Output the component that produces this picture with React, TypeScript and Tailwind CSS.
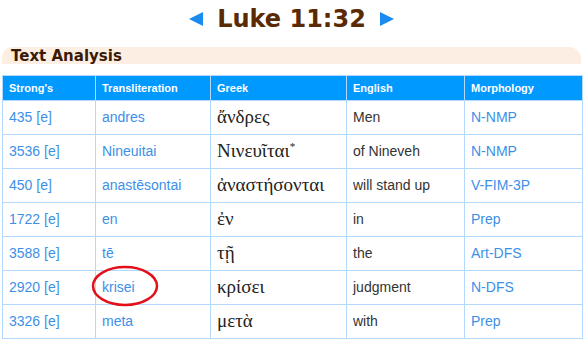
import React from 'react';

const rows = [
  { num: '435', translit: 'andres', greek: 'ἄνδρες', english: 'Men', morph: 'N-NMP' },
  { num: '3536', translit: 'Nineuitai', greek: 'Νινευῖται', star: true, english: 'of Nineveh', morph: 'N-NMP' },
  { num: '450', translit: 'anastēsontai', greek: 'ἀναστήσονται', english: 'will stand up', morph: 'V-FIM-3P' },
  { num: '1722', translit: 'en', greek: 'ἐν', english: 'in', morph: 'Prep' },
  { num: '3588', translit: 'tē', greek: 'τῇ', english: 'the', morph: 'Art-DFS' },
  { num: '2920', translit: 'krisei', greek: 'κρίσει', english: 'judgment', morph: 'N-DFS', circled: true },
  { num: '3326', translit: 'meta', greek: 'μετὰ', english: 'with', morph: 'Prep' },
];

const Arrow = ({ dir }: { dir: 'left' | 'right' }) => (
  <svg width="16" height="16" viewBox="0 0 16 16" className="shrink-0">
    {dir === 'left' ? <polygon points="15,1 15,15 1,8" fill="#1a8cf0" /> : <polygon points="1,1 1,15 15,8" fill="#1a8cf0" />}
  </svg>
);

export default function App() {
  return (
    <div className="w-[583px] h-[340px] bg-white overflow-hidden font-['Liberation_Sans',Arial,sans-serif]">
      {/* Title */}
      <div className="flex items-center justify-center h-[36px] pt-[2px]">
        <Arrow dir="left" />
        <h1 className="mx-[13px] font-['DejaVu_Sans',Verdana,sans-serif] font-bold text-[24px] leading-[30px] text-[#5a2a04]">
          Luke 11:32
        </h1>
        <Arrow dir="right" />
      </div>

      {/* Section heading */}
      <div className="mx-[2px] mt-[11px] h-[17px] bg-[#fdeee3] rounded-tl-[10px] rounded-tr-[12px] pl-[9px]">
        <h2 className="font-['DejaVu_Sans',Verdana,sans-serif] font-bold text-[15px] leading-[19px] text-[#3a1a04]">
          Text Analysis
        </h2>
      </div>

      {/* Table */}
      <table className="mx-[2px] mt-[11px] w-[580px] table-fixed border-collapse">
        <colgroup>
          <col className="w-[93px]" />
          <col className="w-[115px]" />
          <col className="w-[136px]" />
          <col className="w-[118px]" />
          <col className="w-[118px]" />
        </colgroup>
        <thead>
          <tr className="bg-[#0099ff] h-[25px]">
            {["Strong's", 'Transliteration', 'Greek', 'English', 'Morphology'].map((h) => (
              <th key={h} className="border border-[#b3d9ff] px-[6px] text-left text-[11px] font-bold text-white">
                {h}
              </th>
            ))}
          </tr>
        </thead>
        <tbody>
          {rows.map((r) => (
            <tr key={r.num} className="h-[34px]">
              <td className="border border-[#b3d9ff] px-[6px] text-[14px] text-[#3d8fe8]">{r.num} [e]</td>
              <td className="border border-[#b3d9ff] px-[6px] text-[14px] text-[#3d8fe8]">
                {r.circled ? (
                  <span className="relative inline-block">
                    {r.translit}
                    <svg width="68" height="42" viewBox="0 0 68 42" className="absolute left-[-11px] top-[-12px] pointer-events-none">
                      <ellipse cx="34" cy="21" rx="32" ry="19" fill="none" stroke="#e3101c" strokeWidth="2.5" />
                    </svg>
                  </span>
                ) : (
                  r.translit
                )}
              </td>
              <td className="border border-[#b3d9ff] px-[6px] font-['Liberation_Serif','Times_New_Roman',serif] text-[19px] text-[#222]">
                {r.greek}
                {r.star && <span className="relative top-[-7px] text-[11px]">*</span>}
              </td>
              <td className="border border-[#b3d9ff] px-[6px] text-[14px] text-[#333]">{r.english}</td>
              <td className="border border-[#b3d9ff] px-[6px] text-[14px] text-[#3d8fe8]">{r.morph}</td>
            </tr>
          ))}
        </tbody>
      </table>
    </div>
  );
}
